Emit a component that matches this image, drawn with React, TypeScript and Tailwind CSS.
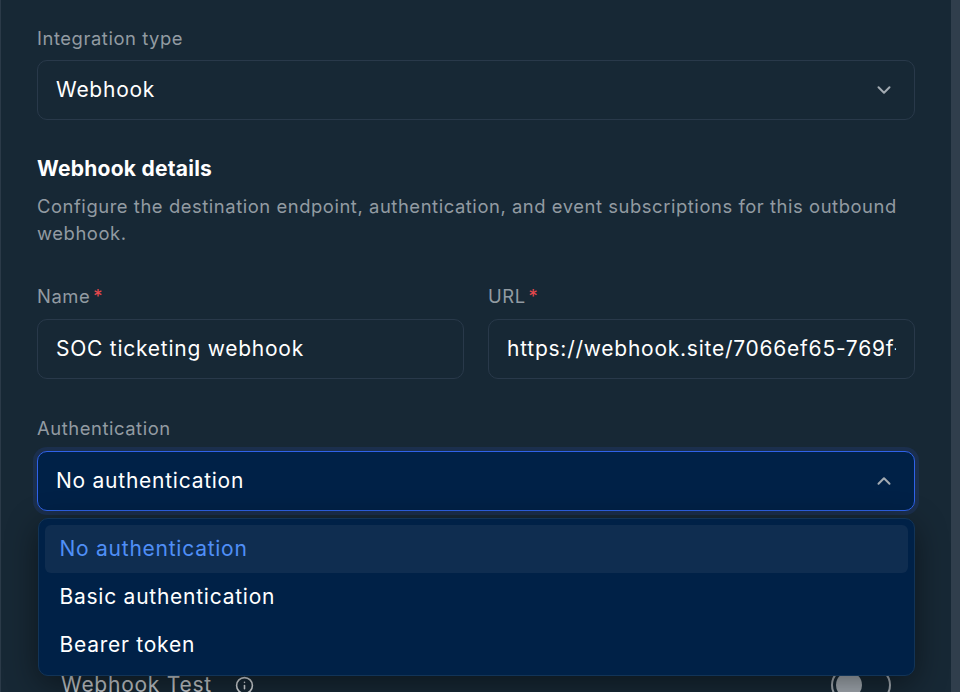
import { ChevronDown, ChevronUp, Info } from "lucide-react";

const authOptions = ["No authentication", "Basic authentication", "Bearer token"];

function Label({ text, required }: { text: string; required?: boolean }) {
  return (
    <div className="flex h-[22px] items-center text-[18.4px] tracking-[0.56px] text-[#929ba2]">
      {text}
      {required && <span className="ml-[3px] text-[#e5484d]">*</span>}
    </div>
  );
}

function TextField({ value }: { value: string }) {
  return (
    <div className="flex h-[60px] items-center rounded-[10px] border border-[#29394a] px-[18px]">
      <input
        readOnly
        value={value}
        className="w-full bg-transparent text-[21px] tracking-[0.75px] text-white outline-none"
      />
    </div>
  );
}

export default function App() {
  return (
    <div className="flex h-[692px] w-[960px] overflow-hidden bg-[#172835] font-['Inter',sans-serif]">
      <div className="h-full w-px bg-[#2b3a48]" />
      <main className="relative flex-1 pt-[28px] pr-[36px] pl-[36px]">
        <Label text="Integration type" />
        <div className="mt-[10px] flex h-[60px] items-center justify-between rounded-[10px] border border-[#29394a] px-[18px]">
          <span className="text-[21px] tracking-[0.75px] text-white">Webhook</span>
          <ChevronDown className="mr-[1px] h-[22px] w-[22px] text-[#a3abb2]" strokeWidth={2.2} />
        </div>

        <h2 className="mt-[37px] text-[21px] leading-[24px] font-bold tracking-[0.25px] text-white">Webhook details</h2>
        <p className="mt-[12px] text-[18.4px] leading-[27px] tracking-[0.56px] text-[#929ba2]">
          Configure the destination endpoint, authentication, and event subscriptions for this outbound webhook.
        </p>

        <div className="mt-[39px] grid grid-cols-2 gap-[24px]">
          <div>
            <Label text="Name" required />
            <div className="mt-[11px]">
              <TextField value="SOC ticketing webhook" />
            </div>
          </div>
          <div>
            <Label text="URL" required />
            <div className="mt-[11px]">
              <TextField value="https://webhook.site/7066ef65-769f-4c1e-9a52" />
            </div>
          </div>
        </div>

        <div className="mt-[39px]">
          <Label text="Authentication" />
        </div>
        <div className="mt-[11px] flex h-[60px] items-center justify-between rounded-[10px] border-[1.5px] border-[#2f62e8] bg-[#002147] px-[18px] shadow-[0_0_0_4px_#1b2f4d]">
          <span className="text-[21px] tracking-[0.75px] text-white">No authentication</span>
          <ChevronUp className="mr-[1px] h-[22px] w-[22px] text-[#a3abb2]" strokeWidth={2.2} />
        </div>

        <div className="mt-[156px] flex items-center justify-between pr-[24px] pl-[24px]">
          <div className="flex items-center gap-[23px]">
            <span className="text-[21px] tracking-[0.75px] text-[#c5cace]">Webhook Test</span>
            <Info className="h-[19px] w-[19px] text-[#d5d9dc]" strokeWidth={2} />
          </div>
          <div className="flex h-[36px] w-[60px] items-center rounded-full border-2 border-[#a3abb2] pl-[3px]">
            <div className="h-[26px] w-[26px] rounded-full bg-[#a3abb2]" />
          </div>
        </div>

        {/* open select menu */}
        <div className="absolute top-[518px] right-[36px] left-[37px] h-[158px] rounded-[10px] border border-[#123457] bg-[#002147] p-[6px] shadow-[0_8px_32px_rgba(0,0,0,0.45)]">
          {authOptions.map((opt, i) => (
            <div
              key={opt}
              className={
                i === 0
                  ? "flex h-[48px] items-center rounded-[6px] bg-[#0f2d50] px-[14.5px] text-[21px] tracking-[0.75px] text-[#4f8ff7]"
                  : "flex h-[48px] items-center rounded-[6px] px-[14.5px] text-[21px] tracking-[0.75px] text-white"
              }
            >
              {opt}
            </div>
          ))}
        </div>
      </main>
      <div className="h-full w-[9px] bg-[#303e4c]" />
    </div>
  );
}
